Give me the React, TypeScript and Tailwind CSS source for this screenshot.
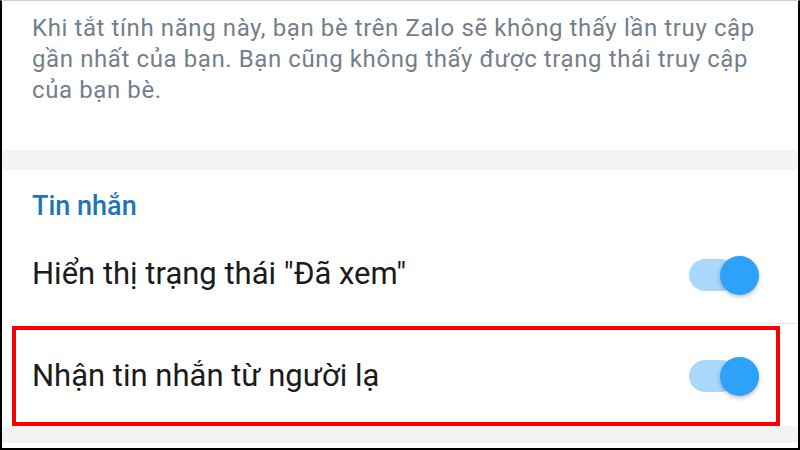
export default function App() {
  const font = { fontFamily: "Roboto, 'Noto Sans', sans-serif" };

  const Toggle = () => (
    <div className="relative w-[72px] h-[40px] flex items-center">
      <div className="ml-[1px] w-[48px] h-[32px] rounded-full bg-[#a9d8fb]" />
      <div className="absolute right-[1px] top-[1px] w-[39px] h-[39px] rounded-full bg-[#2ea2f8] shadow-[0_2px_4px_rgba(0,0,0,0.25)]" />
    </div>
  );

  return (
    <div
      className="w-[800px] h-[450px] overflow-hidden bg-white border-l-2 border-r-2 border-b-2 border-t border-l-black border-r-black border-b-black border-t-[#d0d0d0] flex flex-col"
      style={font}
    >
      {/* description */}
      <div className="h-[149px] pl-[30px] pt-[12px] text-[24px] leading-[31px] tracking-[0.025em] text-[#737f8b] whitespace-nowrap">
        Khi tắt tính năng này, bạn bè trên Zalo sẽ không thấy lần truy cập
        <br />
        gần nhất của bạn. Bạn cũng không thấy được trạng thái truy cập
        <br />
        của bạn bè.
      </div>

      <div className="h-[20px] bg-[#f2f3f5]" />

      {/* header */}
      <div className="h-[72px] flex items-center pl-[30px] text-[27px] font-medium text-[#1f75bb]">
        Tin nhắn
      </div>

      {/* row 1 */}
      <div className="h-[81px] flex items-center justify-between pl-[30px] pr-[38px] pb-[16px]">
        <span className="text-[31px] text-[#1b1b1b]">Hiển thị trạng thái "Đã xem"</span>
        <Toggle />
      </div>
      <div className="ml-[29px] h-px bg-[#e6e7e9]" />

      {/* row 2 */}
      <div className="mt-[2px] ml-[10px] w-[768px] h-[100px] border-[4.5px] border-[#ff0000] flex items-center justify-between pl-[16px] pr-[16px]">
        <span className="text-[31px] text-[#1b1b1b]">Nhận tin nhắn từ người lạ</span>
        <Toggle />
      </div>

      <div className="h-[17px] bg-[#f2f3f5]" />
      <div className="flex-1 bg-white" />
    </div>
  );
}
